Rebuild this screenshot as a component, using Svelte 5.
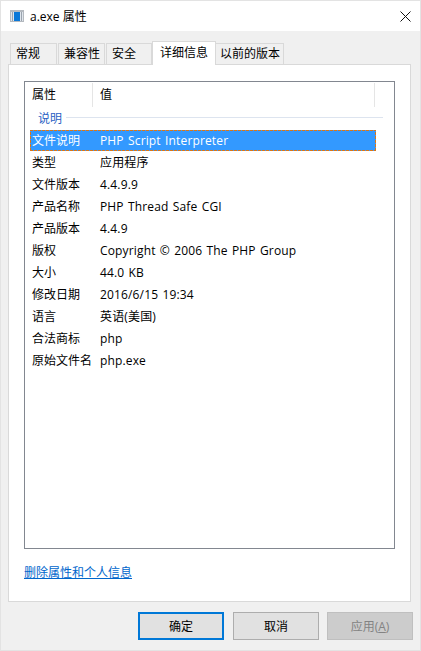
<script>
	const rows = [
		['文件说明', 'PHP Script Interpreter'],
		['类型', '应用程序'],
		['文件版本', '4.4.9.9'],
		['产品名称', 'PHP Thread Safe CGI'],
		['产品版本', '4.4.9'],
		['版权', 'Copyright © 2006 The PHP Group'],
		['大小', '44.0 KB'],
		['修改日期', '2016/6/15 19:34'],
		['语言', '英语(美国)'],
		['合法商标', 'php'],
		['原始文件名', 'php.exe']
	];
	const tabs = ['常规', '兼容性', '安全', '详细信息', '以前的版本'];
	let active = 3;
	let selected = 0;
</script>

<div class="window">
	<div class="titlebar">
		<svg class="app-icon" width="14" height="12" viewBox="0 0 14 12">
			<rect x="0" y="0" width="14" height="12" fill="#b4b9bf" />
			<rect x="1" y="2" width="12" height="9" fill="#dfe5ec" />
			<rect x="4" y="2" width="6" height="9" fill="#0a78d8" />
			<rect x="11" y="2" width="1" height="9" fill="#9aa3ad" />
			<rect x="2" y="2" width="1" height="9" fill="#9aa3ad" />
		</svg>
		<span class="title">a.exe 属性</span>
		<svg class="close" width="11" height="11" viewBox="0 0 11 11">
			<path d="M0.5 0.5 L10.5 10.5 M10.5 0.5 L0.5 10.5" stroke="#111" stroke-width="1" fill="none" />
		</svg>
	</div>

	<div class="body">
		<div class="tabs">
			{#each tabs as tab, i}
				<div class="tab" class:active={i === active}>{tab}</div>
			{/each}
		</div>

		<div class="panel">
			<div class="listbox">
				<div class="header">
					<div class="col-name">属性</div>
					<div class="col-value">值</div>
				</div>
				<div class="group">
					<span>说明</span>
					<div class="group-line"></div>
				</div>
				{#each rows as row, i}
					<div class="row" class:selected={i === selected}>
						<div class="name">{row[0]}</div>
						<div class="value">{row[1]}</div>
					</div>
				{/each}
			</div>
			<div class="link">删除属性和个人信息</div>
		</div>

		<div class="buttons">
			<button class="primary">确定</button>
			<button class="cancel">取消</button>
			<button class="disabled" disabled>应用(<u>A</u>)</button>
		</div>
	</div>
</div>

<style>
	:global(body) {
		margin: 0;
		background: #fff;
	}

	.window {
		width: 421px;
		height: 651px;
		box-sizing: border-box;
		border: 1px solid #e3e3e3;
		background: #f0f0f0;
		font-family: 'Open Sans', 'Noto Sans CJK SC', sans-serif;
		font-size: 12px;
		color: #000;
		display: flex;
		flex-direction: column;
	}

	.titlebar {
		height: 30px;
		background: #fff;
		display: flex;
		align-items: center;
		padding: 0 9px 0 9px;
		flex-shrink: 0;
	}

	.title {
		margin-left: 6px;
		font-size: 12px;
	}

	.close {
		margin-left: auto;
	}

	.body {
		flex: 1;
		display: flex;
		flex-direction: column;
		padding: 0 9px 0 7px;
	}

	.tabs {
		display: flex;
		height: 33px;
		align-items: flex-end;
		padding-left: 2px;
		flex-shrink: 0;
	}

	.tab {
		box-sizing: border-box;
		height: 22px;
		margin-bottom: -1px;
		margin-right: 1px;
		padding: 0 5px;
		width: 47px;
		line-height: 20px;
		white-space: nowrap;
		background: #f0f0f0;
		border: 1px solid #d9d9d9;
		border-bottom: none;
	}

	.tab:nth-child(3) {
		width: 46px;
		margin-right: 0;
	}

	.tab:nth-child(5) {
		width: 69px;
		margin-left: -1px;
		padding: 0 4px;
	}

	.tab.active {
		position: relative;
		z-index: 1;
		width: 64px;
		height: 24px;
		margin-right: 0;
		padding: 0 7px;
		line-height: 22px;
		background: #fff;
	}

	.panel {
		box-sizing: border-box;
		height: 538px;
		background: #fff;
		border: 1px solid #d9d9d9;
		padding: 16px 15px 0 15px;
		flex-shrink: 0;
	}

	.listbox {
		box-sizing: border-box;
		height: 468px;
		border: 1px solid #828790;
		padding: 1px 18px 0 5px;
	}

	.header {
		display: flex;
		height: 24px;
		line-height: 24px;
		margin-right: 1px;
	}

	.col-name {
		width: 63px;
		padding-left: 2px;
		box-sizing: border-box;
		border-right: 1px solid #e5e5e5;
	}

	.col-value {
		flex: 1;
		padding-left: 7px;
		border-right: 1px solid #e5e5e5;
	}

	.group {
		display: flex;
		align-items: center;
		box-sizing: border-box;
		height: 23px;
		padding: 0 0 2px 8px;
		color: #2a5fc4;
		margin-right: -7px;
	}

	.group-line {
		flex: 1;
		height: 1px;
		margin-left: 4px;
		background: #dde4ef;
	}

	.row {
		display: flex;
		box-sizing: border-box;
		height: 22px;
		line-height: 21px;
	}

	.row.selected {
		height: 21px;
		margin-bottom: 1px;
		color: #fff;
		background:
			repeating-linear-gradient(90deg, #d9761a 0 3px, transparent 3px 4px) top / 100% 1px no-repeat,
			repeating-linear-gradient(90deg, #d9761a 0 3px, transparent 3px 4px) bottom / 100% 1px no-repeat,
			repeating-linear-gradient(0deg, #d9761a 0 3px, transparent 3px 4px) left / 1px 100% no-repeat,
			repeating-linear-gradient(0deg, #d9761a 0 3px, transparent 3px 4px) right / 1px 100% no-repeat,
			#3399ff;
	}

	.name {
		width: 70px;
		padding-left: 2px;
		box-sizing: border-box;
		white-space: nowrap;
	}

	.value {
		white-space: nowrap;
		letter-spacing: 0.15px;
		word-spacing: 1px;
	}

	.link {
		margin-top: 16px;
		color: #0066cc;
		text-decoration: underline;
		line-height: 16px;
	}

	.buttons {
		display: flex;
		justify-content: flex-end;
		gap: 8px;
		padding-top: 10px;
		margin-right: -2px;
	}

	button {
		box-sizing: border-box;
		width: 86px;
		height: 28px;
		padding: 0;
		background: #e1e1e1;
		border: 1px solid #adadad;
		font: inherit;
		color: #000;
	}

	button.primary {
		border: 2px solid #0078d7;
		margin-right: 1px;
	}

	button.disabled {
		background: #cccccc;
		border-color: #bfbfbf;
		color: #838383;
	}
</style>
